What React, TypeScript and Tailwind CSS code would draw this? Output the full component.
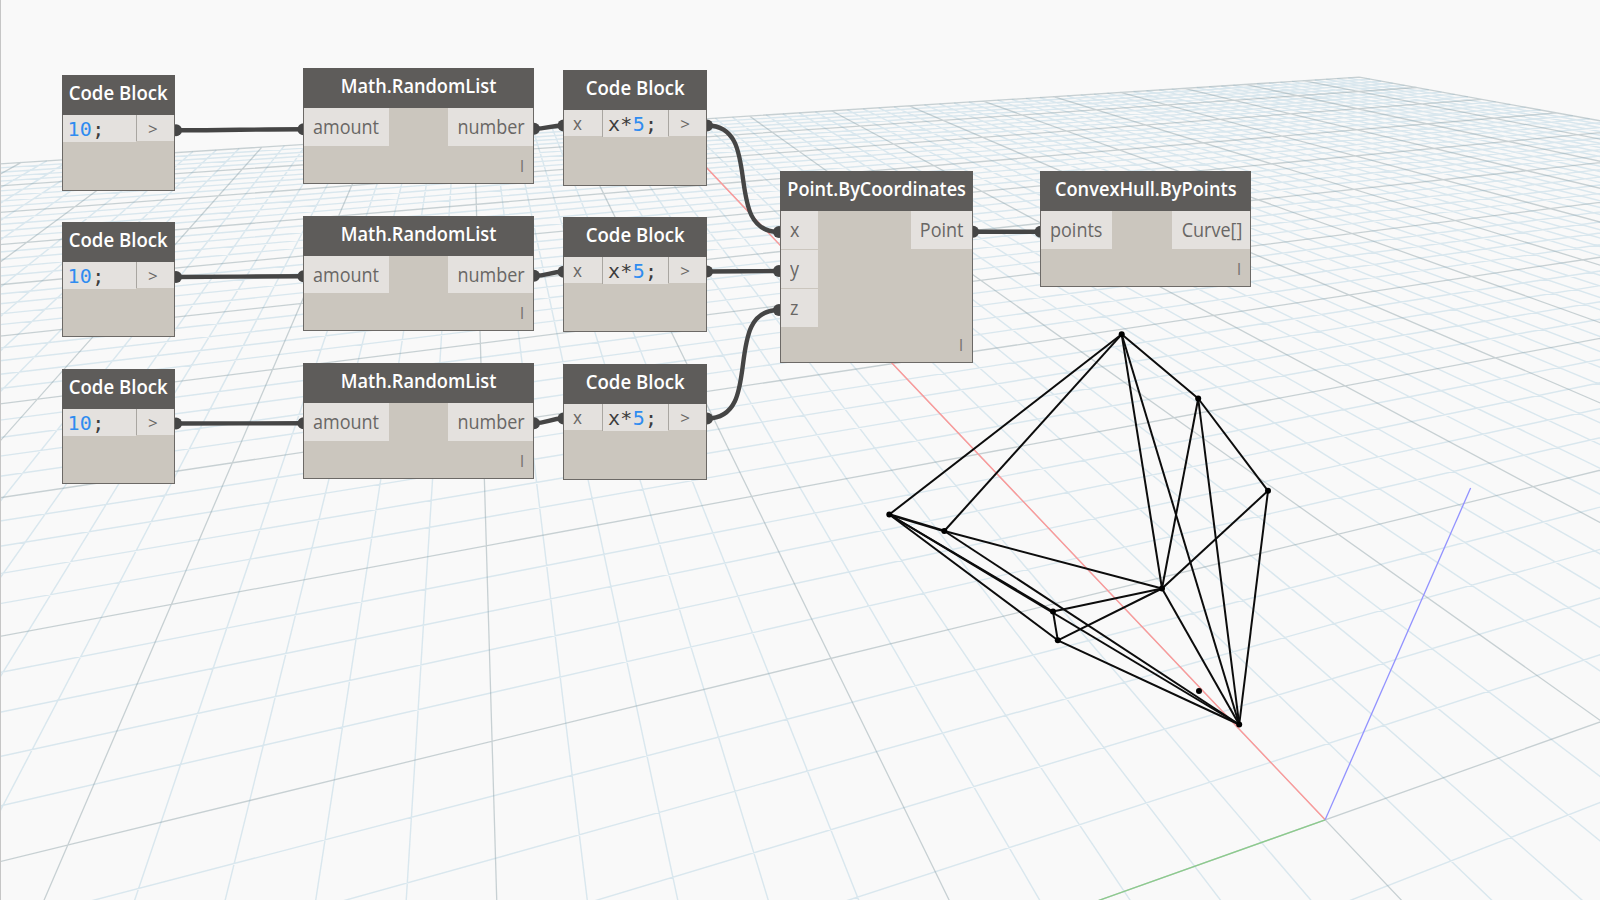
import React from 'react';

// Projective camera for the ground plane: x = (a·u + b·v + c) / w, y = (d·u + e·v + f) / w
const CAMERA = {
  x: [31.78007, 94.542971, 1325.1618],
  y: [-5.7100224, -2.0090529, 819.80783],
  w: [0.067933338, 0.024507666, 1],
};
const SIZE = 50;
const NEAR = 0.12;

type Pt = [number, number];

const dot = (k: number[], u: number, v: number) => k[0] * u + k[1] * v + k[2];
const depth = (u: number, v: number) => dot(CAMERA.w, u, v);

function project(u: number, v: number): Pt {
  const w = depth(u, v);
  return [dot(CAMERA.x, u, v) / w, dot(CAMERA.y, u, v) / w];
}

function segment(a: Pt, b: Pt): string {
  const wa = depth(a[0], a[1]);
  const wb = depth(b[0], b[1]);
  if (wa < NEAR && wb < NEAR) return '';
  let start = a;
  if (wa < NEAR) {
    const t = (NEAR - wa) / (wb - wa);
    start = [a[0] + (b[0] - a[0]) * t, a[1] + (b[1] - a[1]) * t];
  }
  const [x1, y1] = project(start[0], start[1]);
  const [x2, y2] = project(b[0], b[1]);
  return `M${x1.toFixed(1)} ${y1.toFixed(1)}L${x2.toFixed(1)} ${y2.toFixed(1)}`;
}

function gridPath(major: boolean): string {
  let d = '';
  for (let i = -SIZE; i <= SIZE; i++) {
    if ((i % 5 === 0) !== major) continue;
    d += segment([i, -SIZE], [i, SIZE]);
    d += segment([-SIZE, i], [SIZE, i]);
  }
  return d;
}

const T: Pt = [1121.7, 334.3];
const R1: Pt = [1198.2, 398.5];
const R2: Pt = [1268, 490.8];
const L: Pt = [889.3, 514.5];
const M: Pt = [944.3, 531];
const N: Pt = [1162, 588.5];
const Q: Pt = [1053, 611.5];
const S: Pt = [1057.8, 640.3];
const B: Pt = [1239.2, 724.5];
const LOOSE: Pt = [1199, 691];
const EDGES: [Pt, Pt][] = [
  [T, L], [T, M], [T, N], [T, B], [T, R1], [R1, N], [R1, B], [R1, R2], [R2, N], [R2, B],
  [L, M], [M, N], [M, B], [N, Q], [N, S], [N, B], [L, Q], [Q, S], [L, S], [S, B], [L, B],
];

function Scene() {
  const origin = project(0, 0);
  return (
    <svg className="absolute inset-0" width="1600" height="900" viewBox="0 0 1600 900" fill="none">
      <path d={gridPath(false)} stroke="#9cc4d8" strokeOpacity="0.34" strokeWidth="1.4" />
      <path d={gridPath(true)} stroke="#84989f" strokeOpacity="0.42" strokeWidth="1.3" />
      <path d={segment([0, 0], [SIZE, 0])} stroke="#ff9797" strokeWidth="1.3" />
      <path d={segment([0, -SIZE], [0, 0])} stroke="#8ccb8c" strokeWidth="1.3" />
      <path d={`M${origin[0]} ${origin[1]}L1470.6 488`} stroke="#9292ff" strokeWidth="1.3" />
      {EDGES.map(([a, b], i) => (
        <line
          key={i}
          x1={a[0]}
          y1={a[1]}
          x2={b[0]}
          y2={b[1]}
          stroke="#0c0c0c"
          strokeWidth={a === L && b === M ? 2.8 : 2}
        />
      ))}
      {[T, R1, R2, L, M, N, Q, S, B, LOOSE].map((p, i) => (
        <circle key={i} cx={p[0]} cy={p[1]} r="3" fill="#000" />
      ))}
    </svg>
  );
}

const WIRES: [number, number, number, number][] = [
  [176, 130.3, 303.5, 129.3],
  [176, 277, 303.5, 276.3],
  [176, 423.5, 303.5, 423.3],
  [534, 128.7, 563.5, 125.5],
  [534, 275.8, 563.5, 271.8],
  [534, 423.3, 563.5, 418.5],
  [707, 125.5, 779, 232],
  [707, 271.5, 779, 271],
  [707, 418.5, 779, 310],
  [973, 231.8, 1040.5, 231.8],
];

function Wires() {
  return (
    <svg className="absolute inset-0" width="1600" height="900" viewBox="0 0 1600 900" fill="none">
      {WIRES.map(([x1, y1, x2, y2], i) => {
        const bend = Math.hypot(x2 - x1, y2 - y1) * 0.45;
        return (
          <g key={i}>
            <path
              d={`M${x1} ${y1}C${x1 + bend} ${y1} ${x2 - bend} ${y2} ${x2} ${y2}`}
              stroke="#454545"
              strokeWidth="4.4"
            />
            <circle cx={x1} cy={y1} r="6" fill="#454545" />
            <circle cx={x2} cy={y2} r="6" fill="#454545" />
          </g>
        );
      })}
    </svg>
  );
}

function Node({
  place,
  title,
  squeeze = 'scale-x-[.91]',
  children,
}: {
  place: string;
  title: string;
  squeeze?: string;
  children: React.ReactNode;
}) {
  return (
    <section className={`absolute flex flex-col border border-[#6c6966] bg-[#cbc6be] ${place}`}>
      <h2 className="-mx-px -mt-px flex h-10 shrink-0 justify-center bg-[#5e5c5a] text-[20px] leading-[36px] font-semibold whitespace-nowrap text-white">
        <span className={squeeze}>{title}</span>
      </h2>
      {children}
    </section>
  );
}

function Port({ label, side, width }: { label: string; side: 'left' | 'right'; width: string }) {
  return (
    <div
      className={`flex h-[37.5px] bg-[#e4e1de] pl-[8.5px] pr-[8px] text-[20px] leading-[38px] ${width} ${side === 'right' ? 'justify-end' : ''}`}
    >
      <span className={side === 'right' ? 'origin-right scale-x-[.9]' : 'origin-left scale-x-[.9]'}>{label}</span>
    </div>
  );
}

function Lacing() {
  return <span className="absolute right-[9px] bottom-[7px] text-[16px] leading-5 text-[#75726f]">l</span>;
}

function Output() {
  return (
    <div className="flex h-[26px] grow justify-center border-l border-[#a9a6a1] bg-[#e4e1de] pr-[5px] text-[17px] leading-[27px]">
      &gt;
    </div>
  );
}

function NumberBlock({ place }: { place: string }) {
  return (
    <Node place={`left-[62px] w-[113px] h-[115.5px] ${place}`} title="Code Block" squeeze="scale-x-[.93]">
      <div className="flex items-start">
        <div className="h-[27px] w-[72.5px] bg-[#e4e1de] pl-[4.5px] font-[DejaVu_Sans_Mono,monospace] text-[20px] leading-[28px] tracking-[.3px] text-[#3c3c3c]">
          <span className="text-[#2f8cf0]">10</span>;
        </div>
        <Output />
      </div>
    </Node>
  );
}

function FormulaBlock({ place }: { place: string }) {
  return (
    <Node place={`left-[563px] w-[144px] h-[115.5px] ${place}`} title="Code Block" squeeze="scale-x-[.93]">
      <div className="flex items-start">
        <div className="h-[26px] w-[38px] bg-[#e4e1de] pl-[9px] text-[19px] leading-[26px]">
          <span className="inline-block origin-left scale-x-[.9]">x</span>
        </div>
        <div className="h-[27px] w-[66px] border-l border-[#a9a6a1] bg-[#e4e1de] pl-[5px] font-[DejaVu_Sans_Mono,monospace] text-[20px] leading-[28px] tracking-[.3px] text-[#3c3c3c]">
          x*<span className="text-[#2f8cf0]">5</span>;
        </div>
        <Output />
      </div>
    </Node>
  );
}

function RandomList({ place }: { place: string }) {
  return (
    <Node place={`left-[303px] w-[231px] h-[115.5px] ${place}`} title="Math.RandomList">
      <div className="flex justify-between">
        <Port label="amount" side="left" width="w-[85px]" />
        <Port label="number" side="right" width="w-[85px]" />
      </div>
      <Lacing />
    </Node>
  );
}

export default function App() {
  return (
    <main className="relative h-[900px] w-[1600px] overflow-hidden bg-[#f9f9f9] font-['Open_Sans','Noto_Sans',sans-serif] text-[#696765]">
      <Scene />
      <div className="absolute inset-y-0 left-0 w-px bg-[#c6c6c6]" />
      <Wires />
      <NumberBlock place="top-[75px]" />
      <NumberBlock place="top-[221.5px]" />
      <NumberBlock place="top-[368.5px]" />
      <RandomList place="top-[68px]" />
      <RandomList place="top-[215.5px]" />
      <RandomList place="top-[363px]" />
      <FormulaBlock place="top-[70px]" />
      <FormulaBlock place="top-[216.5px]" />
      <FormulaBlock place="top-[364px]" />
      <Node place="left-[780px] top-[171px] h-[192px] w-[193px]" title="Point.ByCoordinates" squeeze="scale-x-[.905]">
        <div className="flex items-start justify-between">
          <div className="flex flex-col gap-[1.5px]">
            <Port label="x" side="left" width="w-[37px]" />
            <Port label="y" side="left" width="w-[37px]" />
            <Port label="z" side="left" width="w-[37px]" />
          </div>
          <Port label="Point" side="right" width="w-[61px]" />
        </div>
        <Lacing />
      </Node>
      <Node place="left-[1040px] top-[171px] h-[115.5px] w-[211px]" title="ConvexHull.ByPoints">
        <div className="flex justify-between">
          <Port label="points" side="left" width="w-[71px]" />
          <Port label="Curve[]" side="right" width="w-[78px]" />
        </div>
        <Lacing />
      </Node>
    </main>
  );
}
